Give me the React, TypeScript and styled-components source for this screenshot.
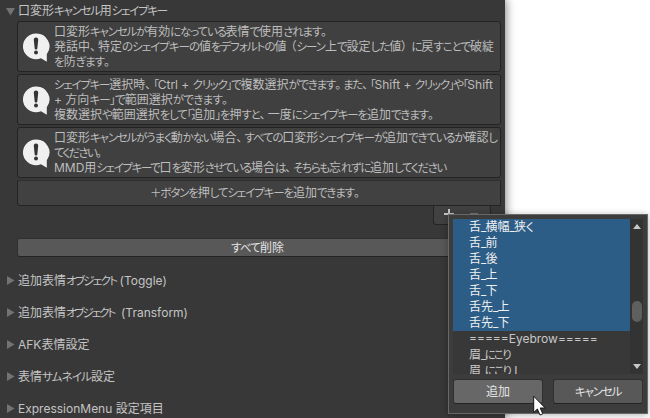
import React, { useLayoutEffect, useRef, useState } from 'react';
import styled, { createGlobalStyle } from 'styled-components';

const GlobalStyle = createGlobalStyle`
  * { box-sizing: border-box; }
  body {
    margin: 0;
    background: #fff;
    overflow: hidden;
    font: 12px/15px Inter, "Noto Sans CJK JP", sans-serif;
    color: #c4c4c4;
  }
  button { font: inherit; padding: 0; }
`;

const Stage = styled.main`
  position: relative;
  width: 650px;
  height: 418px;
  overflow: hidden;
`;

const Inspector = styled.section`
  width: 505px;
  height: 418px;
  background: #383838;
  box-shadow: 0 0 9px 1px rgba(0, 0, 0, 0.5);
`;

const Line = styled.span`
  display: block;
  width: max-content;
  height: 15px;
  line-height: 15px;
  white-space: pre;
  font-feature-settings: "palt";
`;

const Kana = styled.span`
  font-size: 11.5px;
  letter-spacing: var(--kana-spacing, 0px);
`;

const Stop = styled.span`
  padding-right: 2px;
`;

const Paren = styled.span<{ $open: boolean }>`
  padding: ${(p) => (p.$open ? '0 0 0 4px' : '0 4px 0 0')};
`;

const TOKENS = /([、。]|[（）]|[\u3003-\u30ff\uff0b_]+)/;

/* Proportional kana: tightens only the kana so the line takes the given width. */
function Text({ children, width }: { children: string; width: number }) {
  const ref = useRef<HTMLSpanElement>(null);
  const [spacing, setSpacing] = useState(0);
  const parts = children.split(TOKENS);
  const isKana = (p: string, i: number) => i % 2 === 1 && !/[、。（）]/.test(p);
  const kanaCount = parts.reduce((n, p, i) => (isKana(p, i) ? n + p.length : n), 0);
  useLayoutEffect(() => {
    const el = ref.current;
    if (!el || !kanaCount) return;
    el.style.setProperty('--kana-spacing', '0px');
    const natural = el.getBoundingClientRect().width;
    const next = (width - natural) / kanaCount;
    el.style.setProperty('--kana-spacing', `${next}px`);
    setSpacing(next);
  }, [children, width, kanaCount]);
  return (
    <Line ref={ref} style={{ '--kana-spacing': `${spacing}px` } as React.CSSProperties}>
      {parts.map((p, i) => {
        if (isKana(p, i)) return <Kana key={i}>{p}</Kana>;
        if (/^[、。]$/.test(p)) return <Stop key={i}>{p}</Stop>;
        if (/^[（）]$/.test(p)) return <Paren key={i} $open={p === '（'}>{p}</Paren>;
        return p;
      })}
    </Line>
  );
}

const Foldout = styled.div`
  display: flex;
  align-items: center;
  height: 32px;
  padding-left: 6px;
  gap: 3px;
`;

const Header = styled(Foldout)`
  height: 21px;
`;

const Arrow = styled.svg`
  width: 9px;
  height: 9px;
  margin-top: 1px;
  fill: #727272;
  flex: none;
`;

const Boxes = styled.div`
  display: flex;
  flex-direction: column;
  gap: 2px;
  padding: 0 4px 0 17px;
`;

const HelpBox = styled.div`
  display: flex;
  align-items: center;
  height: 51px;
  padding-left: 5px;
  background: #404040;
  border: 1px solid #232323;
  border-radius: 3px;
  color: #bdbdbd;
`;

const InfoIcon = styled.svg`
  width: 27px;
  height: 29px;
  margin: 1px 4px 0 0;
  flex: none;
`;

const Lines = styled.div`
  height: 47px;
  padding-top: 1px;
`;

const EmptyList = styled.div`
  display: flex;
  align-items: center;
  height: 26px;
  padding: 0 0 2px 132px;
  background: #414141;
  border: 1px solid #242424;
  border-top-color: #303030;
  border-radius: 2px 2px 0 3px;
  color: #bdbdbd;
`;

const ListFooter = styled.div`
  display: flex;
  width: 58px;
  height: 20px;
  margin: -1px 0 0 433px;
  padding: 4px 10px;
  gap: 13px;
  background: #414141;
  border: 1px solid #242424;
  border-top: 0;
  border-radius: 0 0 3px 3px;
`;

const FooterGlyph = styled.svg`
  width: 11px;
  height: 11px;
  flex: none;
`;

const PushButton = styled.button<{ $hover?: boolean }>`
  display: flex;
  justify-content: center;
  align-items: center;
  flex: none;
  width: 90px;
  height: 25px;
  color: #e4e4e4;
  background: ${(p) => (p.$hover ? '#676767' : '#585858')};
  border: 1px solid #303030;
  border-bottom-color: #242424;
  border-radius: 3px;
`;

const WideButton = styled(PushButton)`
  width: 484px;
  height: 19px;
  margin: 13px 0 7px 17px;
  padding-right: 3px;
`;

const Popup = styled.aside`
  position: absolute;
  left: 448px;
  top: 214px;
  width: 200px;
  height: 200px;
  padding: 4px;
  background: #3c3c3c;
  border: 1px solid #686868;
  box-shadow: 0 1px 7px rgba(0, 0, 0, 0.3);
`;

const ListArea = styled.div`
  display: flex;
  width: 190px;
  height: 155px;
  background: #383838;
`;

const Items = styled.div`
  width: 177px;
  overflow: hidden;
`;

const Item = styled.div<{ $selected?: boolean }>`
  height: 16px;
  padding-left: 16px;
  color: ${(p) => (p.$selected ? '#f0f0f0' : '#c8c8c8')};
  background: ${(p) => (p.$selected ? '#2c5d87' : 'transparent')};
`;

const ScrollBar = styled.div`
  display: flex;
  flex-direction: column;
  align-items: center;
  width: 13px;
  padding: 5px 0 5px;
  background: #333;
`;

const ScrollArrow = styled.svg`
  width: 8px;
  height: 5px;
  fill: #c8c8c8;
  flex: none;
`;

const Thumb = styled.div`
  width: 10px;
  height: 21px;
  margin: 72px 0 auto 1px;
  background: #5f5f5f;
  border-radius: 5px;
`;

const Actions = styled.div`
  display: flex;
  gap: 10px;
  padding-top: 5px;
`;

const Cursor = styled.svg`
  position: absolute;
  left: 533px;
  top: 395px;
  width: 13px;
  height: 21px;
`;

type Entry = [string, number];

const help: Entry[][] = [
  [
    ['口変形キャンセルが有効になっている表情で使用されます。', 275],
    ['発話中、特定のシェイプキーの値をデフォルトの値（シーン上で設定した値）に戻すことで破綻', 440],
    ['を防ぎます。', 58],
  ],
  [
    ['シェイプキー選択時、「Ctrl + クリック」で複数選択ができます。また、「Shift + クリック」や「Shift', 439],
    ['+ 方向キー」で範囲選択ができます。', 176],
    ['複数選択や範囲選択をして「追加」を押すと、一度にシェイプキーを追加できます。', 382],
  ],
  [
    ['口変形キャンセルがうまく動かない場合、すべての口変形シェイプキーが追加できているか確認し', 443],
    ['てください。', 50],
    ['MMD用シェイプキーで口を変形させている場合は、そちらも忘れずに追加してください', 392],
  ],
];

const sections: Entry[] = [
  ['追加表情オブジェクト (Toggle)', 149],
  ['追加表情オブジェクト  (Transform)', 170],
  ['AFK表情設定', 71],
  ['表情サムネイル設定', 97],
  ['ExpressionMenu 設定項目', 143],
];

const keys: Entry[] = [
  ['舌_横幅_狭く', 64],
  ['舌_前', 28.5],
  ['舌_後', 28.5],
  ['舌_上', 28.5],
  ['舌_下', 28.5],
  ['舌先_上', 40.5],
  ['舌先_下', 40.5],
  ['=====Eyebrow=====', 128],
  ['眉_にこり', 41],
  ['眉_にこり_L', 52],
];

export default function App() {
  return (
    <Stage>
      <GlobalStyle />
      <Inspector>
        <Header>
          <Arrow viewBox="0 0 9 9"><path d="M0 1h9L4.5 8.5z" /></Arrow>
          <Text width={149}>口変形キャンセル用シェイプキー</Text>
        </Header>
        <Boxes>
          {help.map((lines, i) => (
            <HelpBox key={i}>
              <InfoIcon viewBox="0 0 27 29">
                <path d="M13 .5a13 12.9 0 1 0 5 24.800L23.800 28.700V21.200A13 12.900 0 0 0 13 .5z" fill="#f0f0f0" />
                <path d="M13 4.500c-1.600 0-2.300 1-2.200 2.400l.9 8.500c.1 1.400 2.500 1.400 2.600 0l.9-8.500C15.300 5.500 14.600 4.500 13 4.500z" fill="#343434" />
                <circle cx="13" cy="19.600" r="2" fill="#343434" />
              </InfoIcon>
              <Lines>
                {lines.map(([t, w]) => <Text key={t} width={w}>{t}</Text>)}
              </Lines>
            </HelpBox>
          ))}
          <EmptyList><Text width={212}>＋ボタンを押してシェイプキーを追加できます。</Text></EmptyList>
        </Boxes>
        <ListFooter>
          <FooterGlyph viewBox="0 0 11 11"><path d="M0 5h10M5 0v10" stroke="#c4c4c4" strokeWidth="2" /></FooterGlyph>
          <FooterGlyph viewBox="0 0 11 11"><path d="M2 5h8" stroke="#777" strokeWidth="2" /></FooterGlyph>
        </ListFooter>
        <WideButton><Text width={53}>すべて削除</Text></WideButton>
        {sections.map(([t, w]) => (
          <Foldout key={t}>
            <Arrow viewBox="0 0 9 9"><path d="M1 0l7.500 4.500L1 9z" /></Arrow>
            <Text width={w}>{t}</Text>
          </Foldout>
        ))}
      </Inspector>
      <Popup>
        <ListArea>
          <Items>
            {keys.map(([t, w], i) => (
              <Item key={t} $selected={i < 7}><Text width={w}>{t}</Text></Item>
            ))}
          </Items>
          <ScrollBar>
            <ScrollArrow viewBox="0 0 8 5"><path d="M4 0l4 5H0z" /></ScrollArrow>
            <Thumb />
            <ScrollArrow viewBox="0 0 8 5"><path d="M0 0h8L4 5z" /></ScrollArrow>
          </ScrollBar>
        </ListArea>
        <Actions>
          <PushButton $hover><Text width={24}>追加</Text></PushButton>
          <PushButton><Text width={46}>キャンセル</Text></PushButton>
        </Actions>
      </Popup>
      <Cursor viewBox="0 0 13 21">
        <path d="M.7 1.200v16.300l3.700-3.500 2.600 6 2.800-1.200-2.600-5.800h5z" fill="#fff" stroke="#16161c" />
      </Cursor>
    </Stage>
  );
}
